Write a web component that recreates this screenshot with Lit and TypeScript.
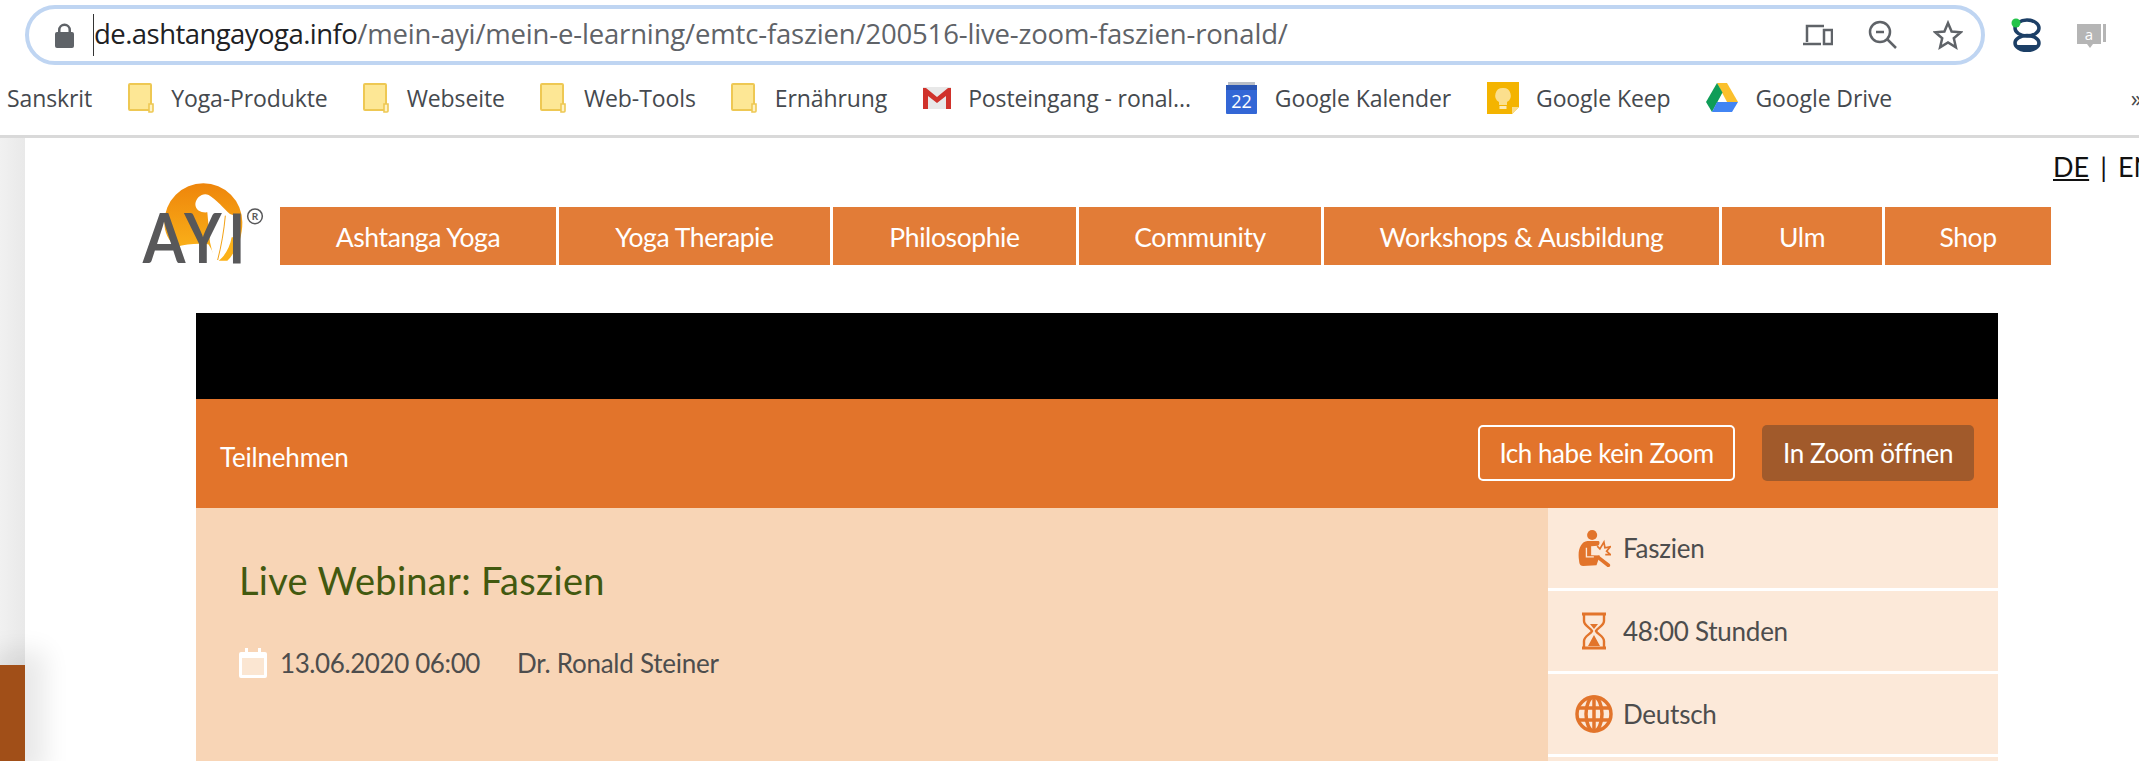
import { LitElement, html, css, svg } from "lit";
import { customElement } from "lit/decorators.js";

const folder = html`<svg class="ic" width="26" height="30" viewBox="0 0 26 30"><path d="M2 1h20a1 1 0 0 1 1 1v25H2a1 1 0 0 1-1-1V2a1 1 0 0 1 1-1z" fill="#fde795" stroke="#eec853" stroke-width="2"/><path d="M21 29h3a1 1 0 0 0 1-1v-7h-4z" fill="#fff2c4" stroke="#eec853" stroke-width="1.6"/></svg>`;
const gmail = html`<svg class="ic" width="28" height="22" viewBox="0 0 28 22"><rect x="0" y="0" width="28" height="22" fill="#e8e8e8"/><path d="M0 22V1h3l11 9 11-9h3v21h-5V9l-9 7-9-7v13z" fill="#d0322b"/></svg>`;
const cal = html`<svg class="ic" width="31" height="32" viewBox="0 0 31 32"><rect x="2" y="0" width="27" height="6" fill="#b9bec6"/><rect y="3" width="31" height="29" rx="1" fill="#3367d6"/><rect y="3" width="31" height="5" fill="#2a56b4"/><text x="15.5" y="26" text-anchor="middle" font-family="Open Sans, sans-serif" font-size="18" fill="#fff">22</text></svg>`;
const keep = html`<svg class="ic" width="32" height="32" viewBox="0 0 32 32"><path d="M0 0h32v25l-7 7H0z" fill="#f4b400"/><path d="M25 32v-7h7z" fill="#f9dc8a"/><path d="M16 6a7.500 7.500 0 0 0-4 14v3h8v-3a7.500 7.500 0 0 0-4-14z" fill="#fbdf8d"/><rect x="12.500" y="24" width="7" height="3" fill="#fbe9b4"/></svg>`;
const drive = html`<svg class="ic" width="32" height="30" viewBox="0 0 32 30"><path d="M11 0h10l11 19H21z" fill="#fbc02d"/><path d="M11 0l5.500 9.500L6 29 0 19z" fill="#0f9d58"/><path d="M11 19h21l-6 10H6z" fill="#4285f4"/></svg>`;

const bookmarks = [
  { icon: null, t: "Sanskrit" },
  { icon: folder, t: "Yoga-Produkte" },
  { icon: folder, t: "Webseite" },
  { icon: folder, t: "Web-Tools" },
  { icon: folder, t: "Ernährung" },
  { icon: gmail, t: "Posteingang - ronal..." },
  { icon: cal, t: "Google Kalender" },
  { icon: keep, t: "Google Keep" },
  { icon: drive, t: "Google Drive" },
];
const nav = [
  ["Ashtanga Yoga", 276],
  ["Yoga Therapie", 271],
  ["Philosophie", 243],
  ["Community", 242],
  ["Workshops & Ausbildung", 395],
  ["Ulm", 160],
  ["Shop", 166],
] as const;

const logo = html`<svg class="logo" width="138" height="82" viewBox="69 72 414 246">
  <defs><linearGradient id="sun" x1="0" y1="0" x2="0" y2="1"><stop offset="0" stop-color="#ee850b"/><stop offset="1" stop-color="#fcb81b"/></linearGradient></defs>
  <path d="M133 190A117 117 0 1 1 367 190C367 235 352 275 325 305L290 305C280 285 275 270 265 256C235 252 200 255 168 264C145 245 133 220 133 190Z" fill="url(#sun)"/>
  <path d="M226 135C228 115 248 100 266 108C290 122 312 150 330 165L345 170L338 312L285 312L270 250L262 160C245 162 226 155 226 135Z" fill="#fff"/>
  <path d="M316 170C310 215 305 260 292 302C310 295 322 280 330 262L336 170Z" fill="#fff"/>
  <path d="M316 170C312 215 304 260 293 303" fill="none" stroke="#f3a215" stroke-width="3"/>
  <path d="M358 235C352 265 338 290 322 305L296 305C314 292 330 265 335 235Z" fill="#fbb119"/>
  <text x="68" y="312" font-family="Lato, sans-serif" font-weight="700" font-size="204" fill="#58585a" textLength="128" lengthAdjust="spacingAndGlyphs">A</text>
  <text x="193" y="312" font-family="Lato, sans-serif" font-weight="700" font-size="204" fill="#58585a" textLength="112" lengthAdjust="spacingAndGlyphs">Y</text>
  <text x="322" y="312" font-family="Lato, sans-serif" font-weight="400" font-size="204" fill="#58585a" stroke="#58585a" stroke-width="3">I</text>
  <circle cx="405" cy="172" r="22" fill="#fff" stroke="#58585a" stroke-width="4.500"/>
  <text x="405" y="183" text-anchor="middle" font-family="Lato, sans-serif" font-weight="700" font-size="30" fill="#58585a">R</text>
</svg>`;

const personIcon = svg`<svg class="rowic" width="33" height="37" viewBox="167 90 98 110" fill="#e2742b"><circle cx="209" cy="105" r="15"/><path d="M170 180C165 150 175 125 195 123H228C232 123 232 135 226 137L206 138V165L232 166L222 195L182 197C172 197 171 190 170 180Z"/><path d="M192 143V170H214" fill="none" stroke="#fce9d9" stroke-width="4"/><path d="M224 138L232 146L244 126L247 143L263 140L252 153L263 163L248 163" fill="none" stroke="#e2742b" stroke-width="5"/><path d="M228 172L257 195" stroke="#e2742b" stroke-width="11" stroke-linecap="round"/></svg>`;
const glassIcon = svg`<svg class="rowic" width="24" height="38" viewBox="0 0 24 38" fill="none" stroke="#e2742b" stroke-width="2.400"><path d="M0 2h24M0 36h24" stroke-width="3"/><path d="M2 2v7c0 5 7 7 8 10-1 3-8 5-8 10v7M22 2v7c0 5-7 7-8 10 1 3 8 5 8 10v7"/><path d="M8 12h8l-4 5zM12 23l6 11H6z" fill="#e2742b" stroke="none"/></svg>`;
const globeIcon = svg`<svg class="rowic" width="38" height="38" viewBox="0 0 38 38" fill="none" stroke="#e2742b" stroke-width="3.500"><circle cx="19" cy="19" r="17"/><ellipse cx="19" cy="19" rx="8" ry="17"/><path d="M3 13h32M3 25h32M19 2v34"/></svg>`;

const rows = [
  { icon: personIcon, t: "Faszien" },
  { icon: glassIcon, t: "48:00 Stunden" },
  { icon: globeIcon, t: "Deutsch" },
  { icon: null, t: "" },
];

@customElement("app-root")
export class AppRoot extends LitElement {
  static styles = css`
    :host { display: block; width: 2139px; height: 761px; overflow: hidden; background: #fff; font-family: Lato, sans-serif; }
    .toolbar { height: 65px; display: flex; align-items: flex-end; padding-left: 25px; box-sizing: border-box; }
    .omni { box-sizing: border-box; width: 1960px; height: 60px; border: 4px solid #bfd5f2; border-radius: 30px; display: flex; align-items: center; padding: 0 18px 0 26px; }
    .url { margin-left: 19px; flex: 1; font: 27.5px "Open Sans", sans-serif; letter-spacing: -0.17px; color: #5f6368; white-space: nowrap; border-left: 1.5px solid #333; line-height: 40px; padding-bottom: 2px; }
    .url b { font-weight: 400; color: #202124; letter-spacing: -0.55px; }
    .omni-icons { display: flex; align-items: center; gap: 35px; }
    .exts { display: flex; align-items: center; gap: 34px; padding: 0 0 0 26px; height: 60px; }
    .bookmarks { height: 73px; box-sizing: border-box; border-bottom: 3px solid #d9d9d9; display: flex; align-items: center; padding: 0 0 4px 7px; gap: 35.5px; position: relative; font: 23px "Open Sans", sans-serif; letter-spacing: -0.1px; color: #45494e; white-space: nowrap; }
    .bm { display: flex; align-items: center; gap: 17.5px; }
    .ic { flex: none; }
    .more { position: absolute; right: -3px; top: 17px; }
    .page { display: flex; height: 623px; }
    .gutter { width: 25px; flex: none; display: flex; flex-direction: column; background: linear-gradient(90deg, #f1f1f1, #e9e9e9); }
    .gutter-space { height: 527px; }
    .brown { flex: 1; background: #a14f18; box-shadow: 6px 0 26px 14px rgba(0,0,0,0.09); }
    .main { flex: 1; min-width: 0; }
    .lang { height: 46px; box-sizing: border-box; padding: 12px 0 0 2028px; font-size: 27px; color: #111; white-space: nowrap; }
    .lang u { margin-right: 11px; }
    .lang span { margin-left: 11px; }
    .head { display: flex; align-items: flex-end; padding-left: 118px; height: 81px; }
    .logo { overflow: visible; flex: none; }
    .navbar { display: flex; margin-left: -1px; gap: 3px; }
    .navitem { box-sizing: border-box; height: 58px; padding-top: 2px; background: #e27c37; color: #fff; font-size: 26.5px; display: flex; align-items: center; justify-content: center; white-space: nowrap; letter-spacing: -0.4px; }
    .content { margin: 48px 0 0 171px; width: 1802px; }
    .black { height: 86px; background: #000; }
    .join { height: 109px; background: #e2742b; display: flex; align-items: center; padding: 0 24px; color: #fff; }
    .join-t { flex: 1; font-size: 26px; padding-top: 6px; letter-spacing: -0.2px; }
    .btn { box-sizing: border-box; height: 56px; display: flex; align-items: center; justify-content: center; font-size: 26px; border-radius: 5px; letter-spacing: -0.45px; margin-top: -2px; }
    .btn.o { width: 257px; border: 2px solid #fff; margin-right: 27px; }
    .btn.f { width: 212px; background: #a15a2b; }
    .body { display: flex; height: 400px; }
    .left { flex: 1; background: #f8d5b6; padding: 45px 0 0 43px; }
    h1 { margin: 0; font-weight: 400; font-size: 38px; line-height: 54px; color: #42590f; letter-spacing: 0.3px; }
    .meta { display: flex; align-items: center; margin-top: 40px; font-size: 26px; color: #4d4d4d; letter-spacing: -0.4px; }
    .meta svg { margin-right: 13px; }
    .meta .who { margin-left: 37px; letter-spacing: -0.25px; }
    .side { width: 450px; flex: none; display: flex; flex-direction: column; gap: 3px; background: #fff; }
    .row { height: 80px; flex: none; background: #fce9d9; display: flex; align-items: center; font-size: 26px; letter-spacing: -0.25px; color: #4d4d4d; padding-left: 26px; }
    .ibox { width: 40px; display: flex; justify-content: center; margin-right: 9px; }
  `;

  render() {
    return html`
      <div class="toolbar">
        <div class="omni">
          <svg width="19" height="26" viewBox="0 0 19 26" fill="#5f6368"><path d="M3 11V8a6.500 6.500 0 0 1 13 0v3h-2.500V8a4 4 0 0 0-8 0v3z"/><rect y="10" width="19" height="16" rx="2"/></svg>
          <div class="url"><b>de.ashtangayoga.info</b>/mein-ayi/mein-e-learning/emtc-faszien/200516-live-zoom-faszien-ronald/</div>
          <div class="omni-icons">
            <svg width="30" height="24" viewBox="0 0 30 24" fill="none" stroke="#5f6368" stroke-width="2.500"><path d="M4 19V3h17M0 21h18"/><rect x="21" y="7" width="8" height="14" stroke-width="2.500"/></svg>
            <svg width="30" height="30" viewBox="0 0 30 30" fill="none" stroke="#5f6368" stroke-width="2.500"><circle cx="12" cy="12" r="10"/><path d="M8 12h8M19 19l9 9"/></svg>
            <svg width="30" height="30" viewBox="0 0 30 30" fill="none" stroke="#5f6368" stroke-width="2.500"><path d="M15 3l3.600 8.500 9.200.8-7 6 2.100 9L15 22.500 7.100 27.300l2.100-9-7-6 9.200-.8z"/></svg>
          </div>
        </div>
        <div class="exts">
          <svg width="32" height="34" viewBox="0 0 32 34" fill="none"><ellipse cx="16" cy="10" rx="12" ry="8" stroke="#1c3f66" stroke-width="3.500"/><ellipse cx="16" cy="25" rx="12" ry="7.500" stroke="#1c3f66" stroke-width="3.500"/><path d="M5 27h22c-2 6-20 6-22 0z" fill="#1c3f66"/><circle cx="5" cy="5" r="4.500" fill="#24c44a"/></svg>
          <svg width="32" height="26" viewBox="0 0 32 26"><path d="M0 2h24v20H16l-3 4-3-4H0z" fill="#b5b5b5"/><path d="M26 2h3v18h-3z" fill="#b5b5b5"/><text x="12" y="18" text-anchor="middle" font-family="Open Sans, sans-serif" font-size="15" fill="#fff">a</text></svg>
        </div>
      </div>
      <div class="bookmarks">
        ${bookmarks.map((b) => html`<div class="bm">${b.icon}<span>${b.t}</span></div>`)}
        <span class="more">»</span>
      </div>
      <div class="page">
        <div class="gutter"><div class="gutter-space"></div><div class="brown"></div></div>
        <div class="main">
          <div class="lang"><u>DE</u>|<span>EN</span></div>
          <div class="head">
            ${logo}
            <div class="navbar">
              ${nav.map(([t, w]) => html`<div class="navitem" style="width:${w}px">${t}</div>`)}
            </div>
          </div>
          <div class="content">
            <div class="black"></div>
            <div class="join">
              <div class="join-t">Teilnehmen</div>
              <div class="btn o">Ich habe kein Zoom</div>
              <div class="btn f">In Zoom öffnen</div>
            </div>
            <div class="body">
              <div class="left">
                <h1>Live Webinar: Faszien</h1>
                <div class="meta">
                  <svg width="28" height="30" viewBox="0 0 28 30" fill="#fff"><path d="M2 4h4V0h3v4h10V0h3v4h4a2 2 0 0 1 2 2v22a2 2 0 0 1-2 2H2a2 2 0 0 1-2-2V6a2 2 0 0 1 2-2z"/><rect x="3" y="10" width="22" height="17" fill="#fbe6d2"/></svg>
                  <span>13.06.2020 06:00</span><span class="who">Dr. Ronald Steiner</span>
                </div>
              </div>
              <div class="side">
                ${rows.map((r) => html`<div class="row">${r.icon ? html`<span class="ibox">${r.icon}</span>` : ""}${r.t}</div>`)}
              </div>
            </div>
          </div>
        </div>
      </div>
    `;
  }
}
